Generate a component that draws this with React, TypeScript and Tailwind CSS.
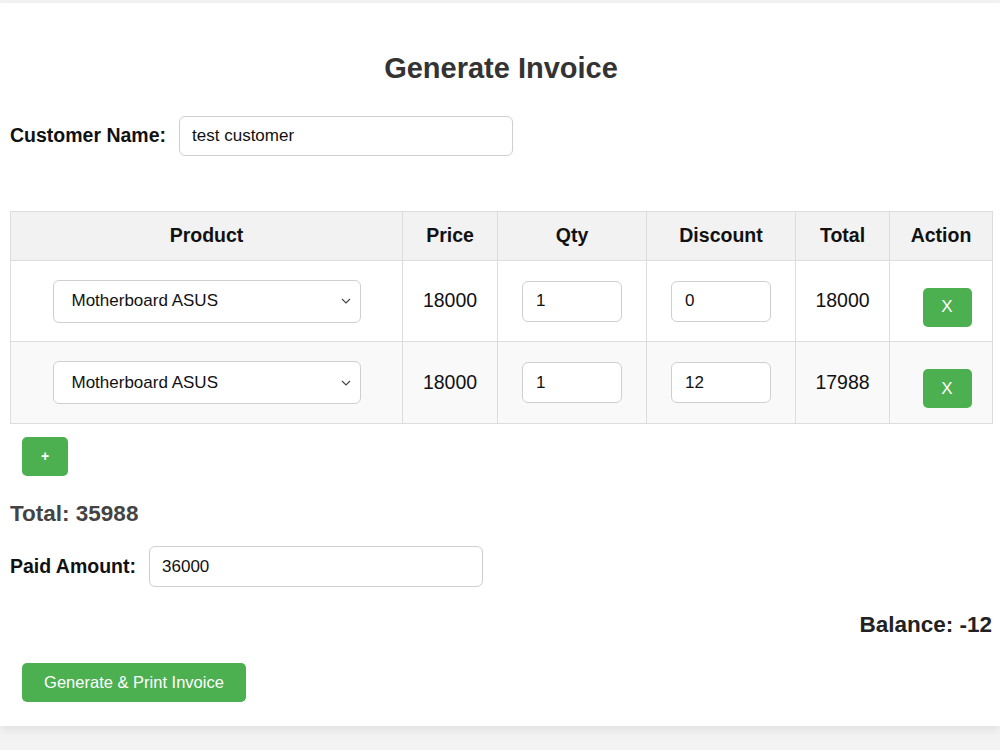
import { useState } from "react";

interface Row {
  product: string;
  price: number;
  qty: number;
  discount: number;
}

const Chevron = () => (
  <svg
    width="10"
    height="6"
    viewBox="0 0 10 6"
    fill="none"
    stroke="#444"
    strokeWidth="1.1"
    className="pointer-events-none absolute right-[10px] top-1/2 -translate-y-1/2"
  >
    <path d="M1 1l4 4 4-4" />
  </svg>
);

const App = () => {
  const [customer, setCustomer] = useState<string>("test customer");
  const [paid, setPaid] = useState<string>("36000");
  const [rows] = useState<Row[]>([
    { product: "Motherboard ASUS", price: 18000, qty: 1, discount: 0 },
    { product: "Motherboard ASUS", price: 18000, qty: 1, discount: 12 },
  ]);

  const total = rows.reduce((s, r) => s + r.price * r.qty - r.discount, 0);
  const balance = total - Number(paid);

  return (
    <div className="min-h-screen bg-[#f3f3f3] pt-[3px] font-['Liberation_Sans',Arial,sans-serif]">
      <div className="bg-white pl-[10px] pr-[8px] pb-[24px] shadow-[0_4px_10px_rgba(0,0,0,0.08)]">
        {/* Title */}
        <h2 className="pt-[48px] text-center text-[29px] leading-[34px] font-bold text-[#333]">
          Generate Invoice
        </h2>

        {/* Customer */}
        <div className="mt-[31px] flex items-center gap-[13px]">
          <label className="text-[19.5px] font-bold text-[#111]">Customer Name:</label>
          <input
            value={customer}
            onChange={(e) => setCustomer(e.target.value)}
            className="h-[40px] w-[334px] rounded-[6px] border border-[#cfcfcf] px-[12px] text-[17px] text-[#111] outline-none"
          />
        </div>

        {/* Items table */}
        <table className="mt-[55px] w-[982px] table-fixed border-collapse text-[19.5px] text-[#111]">
          <colgroup>
            <col className="w-[392px]" />
            <col className="w-[95px]" />
            <col className="w-[149px]" />
            <col className="w-[149px]" />
            <col className="w-[94px]" />
            <col className="w-[103px]" />
          </colgroup>
          <thead>
            <tr className="h-[49px] bg-[#f2f2f2]">
              {["Product", "Price", "Qty", "Discount", "Total", "Action"].map((h) => (
                <th key={h} className="border border-[#dddddd] font-bold">
                  {h}
                </th>
              ))}
            </tr>
          </thead>
          <tbody>
            {rows.map((r, i) => (
              <tr key={i} className={i % 2 === 1 ? "h-[82px] bg-[#f9f9f9]" : "h-[81px] bg-white"}>
                <td className="border border-[#dddddd] text-center">
                  <div className="relative mx-auto w-[308px]">
                    <select
                      defaultValue={r.product}
                      className="h-[43px] w-full appearance-none rounded-[6px] border border-[#cfcfcf] bg-white pl-[18px] text-[17px] text-[#111] outline-none"
                    >
                      <option>Motherboard ASUS</option>
                    </select>
                    <Chevron />
                  </div>
                </td>
                <td className="border border-[#dddddd] text-center">{r.price}</td>
                <td className="border border-[#dddddd] text-center">
                  <input
                    defaultValue={r.qty}
                    className="h-[41px] w-[100px] rounded-[6px] border border-[#cfcfcf] bg-white px-[13px] text-[17px] text-[#111] outline-none"
                  />
                </td>
                <td className="border border-[#dddddd] text-center">
                  <input
                    defaultValue={r.discount}
                    className="h-[41px] w-[100px] rounded-[6px] border border-[#cfcfcf] bg-white px-[13px] text-[17px] text-[#111] outline-none"
                  />
                </td>
                <td className="border border-[#dddddd] text-center">
                  {r.price * r.qty - r.discount}
                </td>
                <td className="border border-[#dddddd] text-center">
                  <button className="mt-[12px] ml-[12px] h-[39px] w-[49px] rounded-[5px] bg-[#4caf50] text-[17px] text-white">
                    X
                  </button>
                </td>
              </tr>
            ))}
          </tbody>
        </table>

        {/* Add row */}
        <button className="mt-[13px] ml-[12px] flex h-[39px] w-[46px] items-center justify-center rounded-[5px] bg-[#4caf50] text-[14px] font-bold text-white">
          +
        </button>

        {/* Total */}
        <div className="mt-[25px] text-[22.5px] leading-[26px] font-bold text-[#444]">
          Total: {total}
        </div>

        {/* Paid */}
        <div className="mt-[19px] flex items-center gap-[13px]">
          <label className="text-[19.5px] font-bold text-[#111]">Paid Amount:</label>
          <input
            value={paid}
            onChange={(e) => setPaid(e.target.value)}
            className="h-[41px] w-[334px] rounded-[6px] border border-[#cfcfcf] px-[12px] text-[17px] text-[#111] outline-none"
          />
        </div>

        {/* Balance */}
        <div className="mt-[25px] text-right text-[22.5px] leading-[26px] font-bold text-[#222]">
          Balance: {balance}
        </div>

        {/* Submit */}
        <button className="mt-[25px] ml-[12px] h-[39px] w-[224px] rounded-[5px] bg-[#4caf50] text-[16.5px] text-white">
          Generate &amp; Print Invoice
        </button>
      </div>
    </div>
  );
};

export default App;
